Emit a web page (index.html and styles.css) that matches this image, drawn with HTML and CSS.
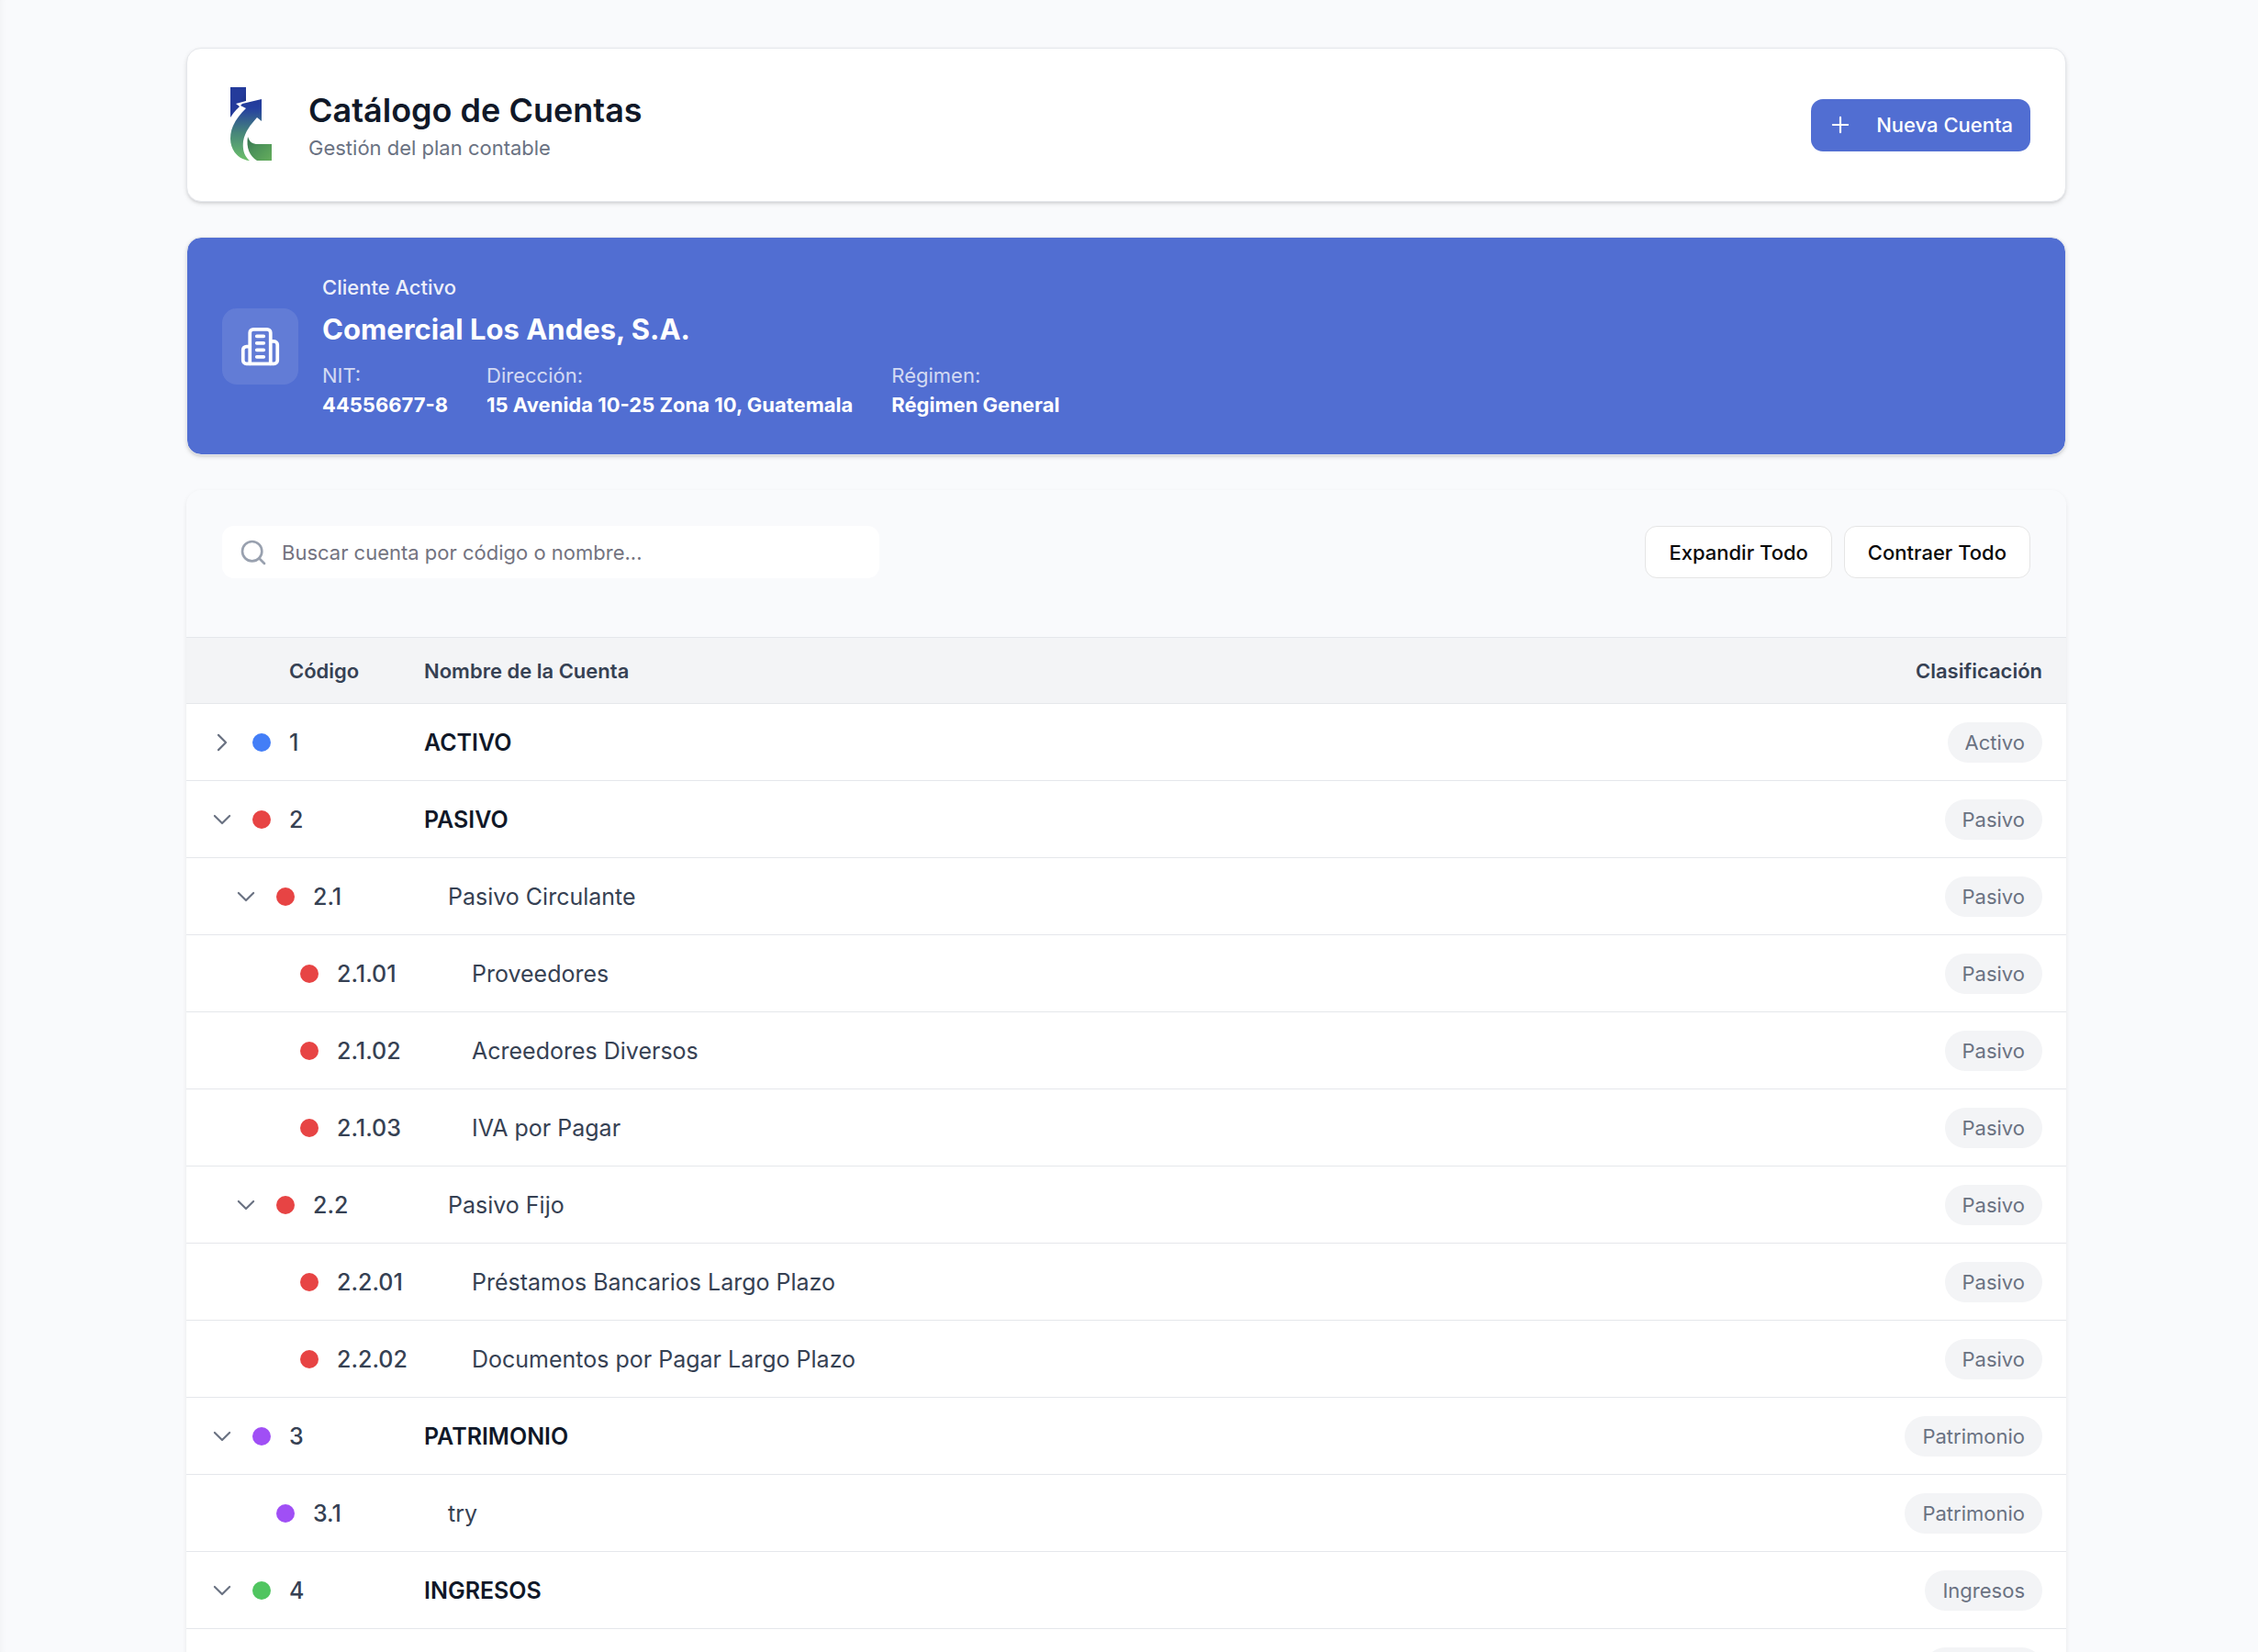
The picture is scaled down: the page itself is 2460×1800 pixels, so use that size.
FILE: index.html
```html
<!DOCTYPE html>
<html lang="es">
<head>
  <meta charset="UTF-8">
  <title>Catálogo de Cuentas</title>
  <link rel="stylesheet" href="styles.css">
</head>
<body>

  <svg class="sprite" aria-hidden="true">
    <symbol id="down" viewBox="0 0 24 24"><path d="m19.500 8.250-7.500 7.500-7.500-7.500"/></symbol>
    <symbol id="right" viewBox="0 0 24 24"><path d="m8.250 4.500 7.500 7.500-7.500 7.500"/></symbol>
  </svg>

  <main class="page">
    <div class="container">

      <header class="card header">
        <svg class="logo" viewBox="0 0 64 90" aria-hidden="true">
          <defs>
            <linearGradient id="arrow" x1="0" y1="0" x2="0" y2="1">
              <stop offset="0" stop-color="#233a98"/>
              <stop offset=".15" stop-color="#2540a0"/>
              <stop offset=".55" stop-color="#47867a"/>
              <stop offset="1" stop-color="#6cc069"/>
            </linearGradient>
            <linearGradient id="foot" x1="0" y1="0" x2="1" y2="1">
              <stop offset="0" stop-color="#33704d"/>
              <stop offset=".4" stop-color="#4b9159"/>
              <stop offset="1" stop-color="#64ad5c"/>
            </linearGradient>
            <linearGradient id="stem" x1="0" y1="0" x2="1" y2="1">
              <stop offset=".5" stop-color="#243b9b"/>
              <stop offset="1" stop-color="#1a2a70"/>
            </linearGradient>
          </defs>
          <path fill="url(#stem)" d="M9 4h17v15l-11 3 4 3c-4 4-7 7-10 12z"/>
          <path fill="url(#arrow)" d="M43 17v24l-5-4C31 45 25 52 23 63c-1 9 1 16 7 21C18 83 9 73 9 60c0-13 7-23 17-33l-6-3 2-2z"/>
          <path fill="url(#foot)" d="M28 58c2 6 5 8 11 8h15v18H38c-8-5-12-14-10-26z"/>
        </svg>
        <div class="heading">
          <h1>Catálogo de Cuentas</h1>
          <p>Gestión del plan contable</p>
        </div>
        <button type="button" class="btn primary">
          <svg class="icon" viewBox="0 0 24 24" aria-hidden="true"><path d="M12 4.500v15m7.500-7.500h-15"/></svg>
          Nueva Cuenta
        </button>
      </header>

      <section class="card client">
        <div class="client-icon">
          <svg viewBox="0 0 24 24" aria-hidden="true">
            <path d="M6 22V4a2 2 0 0 1 2-2h8a2 2 0 0 1 2 2v18Z"/>
            <path d="M6 12H4a2 2 0 0 0-2 2v6a2 2 0 0 0 2 2h2"/>
            <path d="M18 9h2a2 2 0 0 1 2 2v9a2 2 0 0 1-2 2h-2"/>
            <path d="M10 6h4M10 10h4M10 14h4M10 18h4"/>
          </svg>
        </div>
        <div>
          <p class="client-label">Cliente Activo</p>
          <h2>Comercial Los Andes, S.A.</h2>
          <dl>
            <div><dt>NIT:</dt><dd>44556677-8</dd></div>
            <div><dt>Dirección:</dt><dd>15 Avenida 10-25 Zona 10, Guatemala</dd></div>
            <div><dt>Régimen:</dt><dd>Régimen General</dd></div>
          </dl>
        </div>
      </section>

      <section class="catalog">
        <div class="toolbar">
          <label class="search">
            <svg viewBox="0 0 24 24" aria-hidden="true"><circle cx="11" cy="11" r="8"/><path d="m21 21-4.300-4.300"/></svg>
            <input type="text" placeholder="Buscar cuenta por código o nombre..." aria-label="Buscar cuenta">
          </label>
          <div class="actions">
            <button type="button" class="btn outline">Expandir Todo</button>
            <button type="button" class="btn outline">Contraer Todo</button>
          </div>
        </div>

        <table>
          <thead>
            <tr><th class="code">Código</th><th>Nombre de la Cuenta</th><th class="type">Clasificación</th></tr>
          </thead>
          <tbody>
            <tr class="root activo">
              <td><div class="cell"><button type="button" class="toggle" aria-label="Expandir"><svg class="icon"><use href="#right"/></svg></button><span class="dot"></span>1</div></td>
              <td class="name">ACTIVO</td>
              <td class="type"><span class="badge">Activo</span></td>
            </tr>
            <tr class="root pasivo">
              <td><div class="cell"><button type="button" class="toggle" aria-label="Contraer"><svg class="icon"><use href="#down"/></svg></button><span class="dot"></span>2</div></td>
              <td class="name">PASIVO</td>
              <td class="type"><span class="badge">Pasivo</span></td>
            </tr>
            <tr class="level-1 pasivo">
              <td><div class="cell"><button type="button" class="toggle" aria-label="Contraer"><svg class="icon"><use href="#down"/></svg></button><span class="dot"></span>2.1</div></td>
              <td class="name">Pasivo Circulante</td>
              <td class="type"><span class="badge">Pasivo</span></td>
            </tr>
            <tr class="level-2 pasivo">
              <td><div class="cell"><span class="toggle"></span><span class="dot"></span>2.1.01</div></td>
              <td class="name">Proveedores</td>
              <td class="type"><span class="badge">Pasivo</span></td>
            </tr>
            <tr class="level-2 pasivo">
              <td><div class="cell"><span class="toggle"></span><span class="dot"></span>2.1.02</div></td>
              <td class="name">Acreedores Diversos</td>
              <td class="type"><span class="badge">Pasivo</span></td>
            </tr>
            <tr class="level-2 pasivo">
              <td><div class="cell"><span class="toggle"></span><span class="dot"></span>2.1.03</div></td>
              <td class="name">IVA por Pagar</td>
              <td class="type"><span class="badge">Pasivo</span></td>
            </tr>
            <tr class="level-1 pasivo">
              <td><div class="cell"><button type="button" class="toggle" aria-label="Contraer"><svg class="icon"><use href="#down"/></svg></button><span class="dot"></span>2.2</div></td>
              <td class="name">Pasivo Fijo</td>
              <td class="type"><span class="badge">Pasivo</span></td>
            </tr>
            <tr class="level-2 pasivo">
              <td><div class="cell"><span class="toggle"></span><span class="dot"></span>2.2.01</div></td>
              <td class="name">Préstamos Bancarios Largo Plazo</td>
              <td class="type"><span class="badge">Pasivo</span></td>
            </tr>
            <tr class="level-2 pasivo">
              <td><div class="cell"><span class="toggle"></span><span class="dot"></span>2.2.02</div></td>
              <td class="name">Documentos por Pagar Largo Plazo</td>
              <td class="type"><span class="badge">Pasivo</span></td>
            </tr>
            <tr class="root patrimonio">
              <td><div class="cell"><button type="button" class="toggle" aria-label="Contraer"><svg class="icon"><use href="#down"/></svg></button><span class="dot"></span>3</div></td>
              <td class="name">PATRIMONIO</td>
              <td class="type"><span class="badge">Patrimonio</span></td>
            </tr>
            <tr class="level-1 patrimonio">
              <td><div class="cell"><span class="toggle"></span><span class="dot"></span>3.1</div></td>
              <td class="name">try</td>
              <td class="type"><span class="badge">Patrimonio</span></td>
            </tr>
            <tr class="root ingresos">
              <td><div class="cell"><button type="button" class="toggle" aria-label="Contraer"><svg class="icon"><use href="#down"/></svg></button><span class="dot"></span>4</div></td>
              <td class="name">INGRESOS</td>
              <td class="type"><span class="badge">Ingresos</span></td>
            </tr>
            <tr class="level-1 ingresos">
              <td><div class="cell"><span class="toggle"></span><span class="dot"></span></div></td>
              <td class="name"></td>
              <td class="type"><span class="badge">Ingresos</span></td>
            </tr>
          </tbody>
        </table>
      </section>

    </div>
  </main>

</body>
</html>
```
FILE: styles.css
```css
* {
  box-sizing: border-box;
}
body {
  margin: 0;
  font-family: Inter, "Liberation Sans", sans-serif;
  font-size: 22px;
  line-height: 32px;
  color: #364153;
  background: #f9fafc;
}
h1, h2, p, dl, dd {
  margin: 0;
}
button, input {
  font: inherit;
}
svg {
  flex: none;
  fill: none;
  stroke: currentColor;
  stroke-linecap: round;
  stroke-linejoin: round;
}
.sprite {
  display: none;
}
.icon {
  width: 26px;
  height: 26px;
  stroke-width: 2;
}

/* Page */
.page {
  height: 100vh;
  padding: 52px 6px 52px 0;
  overflow-y: auto;
  scrollbar-width: none;
  box-shadow: inset 8px 0 8px -8px rgba(0, 0, 0, 0.05);
}
.container {
  max-width: 2048px;
  margin: 0 auto;
  display: flex;
  flex-direction: column;
  gap: 38px;
}

/* Header */
.card {
  display: flex;
  align-items: center;
  padding: 38px;
  background: #fff;
  border: 1px solid #e5e7eb;
  border-radius: 16px;
  box-shadow: 0 2px 5px rgba(0, 0, 0, 0.1), 0 2px 3px -1px rgba(0, 0, 0, 0.1);
}
.header {
  gap: 30px;
}
.logo {
  width: 64px;
  height: 90px;
  stroke: none;
}
.heading {
  flex: 1;
}
h1 {
  font-size: 36px;
  line-height: 50px;
  font-weight: 600;
  color: #101828;
}
.heading p {
  color: #6a7282;
}
.btn {
  display: inline-flex;
  align-items: center;
  justify-content: center;
  height: 57px;
  border-radius: 13px;
  font-weight: 500;
  white-space: nowrap;
}
.primary {
  gap: 26px;
  padding: 0 19px;
  border: 0;
  color: #fff;
  background: #516ed2;
}
.outline {
  padding: 0 25px;
  border: 1px solid #e5e5e5;
  color: #0a0a0a;
  background: #fff;
}

/* Active client */
.client {
  gap: 26px;
  color: #fff;
  background: #516ed2 padding-box;
}
.client-icon {
  display: flex;
  padding: 19px;
  border-radius: 16px;
  background: rgba(255, 255, 255, 0.1);
}
.client-icon svg {
  width: 45px;
  height: 45px;
  stroke-width: 2;
}
.client-label {
  font-weight: 500;
  opacity: 0.9;
}
h2 {
  margin: 8px 0 12px;
  font-size: 31px;
  line-height: 44px;
  font-weight: 700;
}
dl {
  display: flex;
  gap: 42px;
}
dt {
  opacity: 0.75;
}
dd {
  font-weight: 700;
}

/* Catalog */
.catalog {
  overflow: hidden;
  border-radius: 16px;
  box-shadow: 0 2px 5px rgba(0, 0, 0, 0.08);
}
.toolbar {
  display: flex;
  justify-content: space-between;
  padding: 39px 39px 64px;
}
.search {
  display: flex;
  align-items: center;
  gap: 15px;
  flex: 0 1 716px;
  height: 57px;
  padding: 0 18px;
  border-radius: 13px;
  background: #fff;
}
.search svg {
  width: 32px;
  height: 32px;
  stroke-width: 2;
  color: #99a1af;
}
.search input {
  flex: 1;
  min-width: 0;
  padding: 0;
  border: 0;
  outline: 0;
  background: none;
}
.search input::placeholder {
  color: #737380;
  opacity: 1;
}
.actions {
  display: flex;
  gap: 13px;
}

table {
  width: 100%;
  border-collapse: collapse;
  background: #fff;
}
th {
  height: 72px;
  padding: 0;
  text-align: left;
  font-weight: 600;
  background: #f3f4f6;
  border-top: 1px solid #e5e7eb;
}
th.code {
  width: 259px;
  padding-left: 112px;
}
td {
  height: 84px;
  padding: 0;
  font-size: 25px;
  border-top: 1px solid #e5e7eb;
}
.cell {
  display: flex;
  align-items: center;
  gap: 20px;
  padding-left: 26px;
  font-weight: 500;
}
.toggle {
  display: flex;
  width: 26px;
  height: 26px;
  padding: 0;
  border: 0;
  color: #6a7282;
  background: none;
}
.dot {
  width: 20px;
  height: 20px;
  border-radius: 50%;
}
.root .name {
  font-weight: 600;
  color: #101828;
}
.level-1 .cell {
  padding-left: 52px;
}
.level-1 .name {
  padding-left: 26px;
}
.level-2 .cell {
  padding-left: 78px;
}
.level-2 .name {
  padding-left: 52px;
}
.activo .dot {
  background: #437ef7;
}
.pasivo .dot {
  background: #e74444;
}
.patrimonio .dot {
  background: #a04ff5;
}
.ingresos .dot {
  background: #50c560;
}
th.type, td.type {
  padding-right: 26px;
  text-align: right;
}
.badge {
  display: inline-block;
  padding: 6px 19px;
  border-radius: 22px;
  font-size: 22px;
  vertical-align: middle;
  color: #6a7282;
  background: #f3f4f6;
}
```
